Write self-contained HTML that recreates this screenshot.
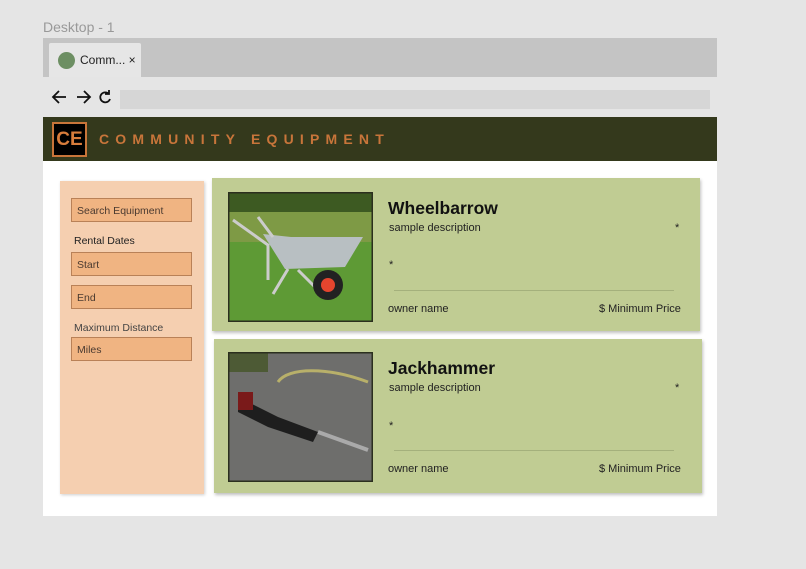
<!DOCTYPE html>
<html><head><meta charset="utf-8"><style>
*{margin:0;padding:0;box-sizing:border-box}
body{width:806px;height:569px;background:#e5e5e5;font-family:"Liberation Sans",sans-serif;position:relative;overflow:hidden}
.a{position:absolute}
.inp{position:absolute;left:71px;width:121px;height:24px;background:#f0b482;border:1px solid #b98157;font-size:10.5px;color:#4a3a30;padding:6px 0 0 5px}
.lbl{position:absolute;left:74px;font-size:10.5px;color:#222}
.card{position:absolute;background:#c0cc93;box-shadow:1px 2px 3px rgba(0,0,0,.25)}
.t{position:absolute;font-size:11px;color:#222}
</style></head><body>
<div class="a" style="left:43px;top:19px;font-size:14px;color:#999">Desktop - 1</div>
<div class="a" style="left:43px;top:38px;width:674px;height:39px;background:#c4c4c4"></div>
<div class="a" style="left:49px;top:43px;width:92px;height:34px;background:#e6e6e6;border-radius:2px 2px 0 0"></div>
<div class="a" style="left:58px;top:52px;width:17px;height:17px;border-radius:50%;background:#6d8f63"></div>
<div class="a" style="left:80px;top:53px;font-size:12px;color:#222">Comm... ×</div>
<svg class="a" style="left:50px;top:88px" width="66" height="18" viewBox="0 0 66 18" fill="none" stroke="#111" stroke-width="1.8">
<path d="M16 9H3M9 3L3 9l6 6"/><path d="M27 9h13M34 3l6 6-6 6"/>
<path d="M59 6a5 5 0 1 0 1 5"/><path d="M59 2v4h-4" /></svg>
<div class="a" style="left:120px;top:90px;width:590px;height:19px;background:#d6d6d6"></div>
<div class="a" style="left:43px;top:117px;width:674px;height:44px;background:#34391c"></div>
<div class="a" style="left:52px;top:122px;width:35px;height:35px;background:#000;border:2px solid #c8753a;color:#d87d3c;font-weight:bold;font-size:19px;text-align:center;line-height:31px">CE</div>
<div class="a" style="left:99px;top:131px;color:#c8753a;font-size:14px;font-weight:bold;letter-spacing:6.2px">COMMUNITY EQUIPMENT</div>
<div class="a" style="left:43px;top:161px;width:674px;height:355px;background:#fff"></div>
<div class="a" style="left:60px;top:181px;width:144px;height:313px;background:#f5cfb0;box-shadow:1px 1px 3px rgba(0,0,0,.2)"></div>
<div class="inp" style="top:198px">Search Equipment</div>
<div class="lbl" style="top:235px">Rental Dates</div>
<div class="inp" style="top:252px">Start</div>
<div class="inp" style="top:285px">End</div>
<div class="lbl" style="top:322px;color:#444">Maximum Distance</div>
<div class="inp" style="top:337px">Miles</div>

<div class="card" style="left:212px;top:178px;width:488px;height:153px"></div>
<svg class="a" style="left:228px;top:192px" width="145" height="130" viewBox="0 0 145 130">
<rect width="145" height="130" fill="#5e9a35"/><rect width="145" height="20" fill="#3d5a22"/>
<rect y="20" width="145" height="30" fill="#7e9a45"/>
<path d="M35 42l28 3 72 0-18 30-60 2z" fill="#b8bfc2"/>
<path d="M5 28l35 25v35M30 25l15 20M60 77l-15 25M70 78l20 20" stroke="#ccc" stroke-width="3" fill="none"/>
<circle cx="100" cy="93" r="15" fill="#222"/><circle cx="100" cy="93" r="7" fill="#e5452e"/>
<rect x="0.75" y="0.75" width="143.5" height="128.5" fill="none" stroke="#2b2f1e" stroke-width="1.5"/></svg>
<div class="a" style="left:388px;top:198px;font-size:17.5px;font-weight:bold;color:#111">Wheelbarrow</div>
<div class="t" style="left:389px;top:222px">sample description</div>
<div class="t" style="left:675px;top:222px">*</div>
<div class="t" style="left:389px;top:259px">*</div>
<div class="a" style="left:394px;top:290px;width:280px;height:1px;background:#a4b07c"></div>
<div class="t" style="left:388px;top:303px">owner name</div>
<div class="t" style="left:599px;top:303px">$ Minimum Price</div>

<div class="card" style="left:214px;top:339px;width:488px;height:154px"></div>
<svg class="a" style="left:228px;top:352px" width="145" height="130" viewBox="0 0 145 130">
<rect width="145" height="130" fill="#6e6e6c"/><rect width="40" height="20" fill="#4d5a35"/>
<path d="M50 30C60 15 100 15 140 30" stroke="#b8b06a" stroke-width="3" fill="none"/>
<path d="M10 45l40 20 40 15-5 10-45-15-30-15z" fill="#1e1e1e"/>
<rect x="10" y="40" width="15" height="18" fill="#7a1a1a"/>
<path d="M90 80l50 18" stroke="#aaa" stroke-width="4"/>
<rect x="0.75" y="0.75" width="143.5" height="128.5" fill="none" stroke="#2b2f1e" stroke-width="1.5"/></svg>
<div class="a" style="left:388px;top:358px;font-size:17.5px;font-weight:bold;color:#111">Jackhammer</div>
<div class="t" style="left:389px;top:382px">sample description</div>
<div class="t" style="left:675px;top:382px">*</div>
<div class="t" style="left:389px;top:420px">*</div>
<div class="a" style="left:394px;top:450px;width:280px;height:1px;background:#a4b07c"></div>
<div class="t" style="left:388px;top:463px">owner name</div>
<div class="t" style="left:599px;top:463px">$ Minimum Price</div>
</body></html>
